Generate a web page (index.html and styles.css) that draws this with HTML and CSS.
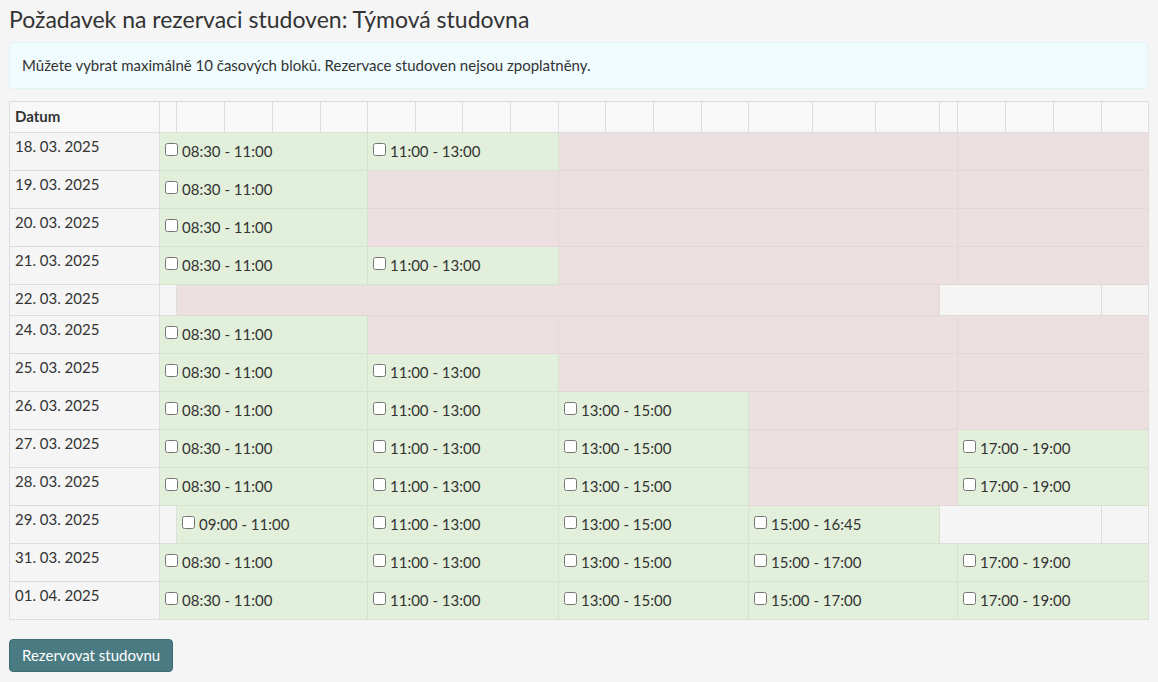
FILE: index.html
```html
<!DOCTYPE html>
<html lang="cs">
<head>
    <meta charset="UTF-8">
    <meta name="viewport" content="width=device-width, initial-scale=1.0">
    <title>Požadavek na rezervaci studoven</title>
    <link rel="stylesheet" href="styles.css">
</head>
<body>
    <div class="page">
        <h1>Požadavek na rezervaci studoven: Týmová studovna</h1>

        <div class="info">Můžete vybrat maximálně 10 časových bloků. Rezervace studoven nejsou zpoplatněny.</div>

        <form>
        <table class="slots">
            <colgroup>
                <col style="width:150px">
                <col style="width:17px">
                <col style="width:48px"><col style="width:48px"><col style="width:48px"><col style="width:47px">
                <col style="width:48px"><col style="width:47px"><col style="width:48px"><col style="width:48px">
                <col style="width:47px"><col style="width:48px"><col style="width:48px"><col style="width:47px">
                <col style="width:64px"><col style="width:63px"><col style="width:64px">
                <col style="width:18px">
                <col style="width:48px"><col style="width:48px"><col style="width:48px"><col style="width:47px">
            </colgroup>
            <thead>
                <tr>
                    <th>Datum</th>
                    <th></th><th></th><th></th><th></th><th></th><th></th><th></th>
                    <th></th><th></th><th></th><th></th><th></th><th></th><th></th>
                    <th></th><th></th><th></th><th></th><th></th><th></th><th></th>
                </tr>
            </thead>
            <tbody>
                <tr>
                    <td class="date">18. 03. 2025</td>
                    <td class="free" colspan="5"><label><input type="checkbox"><span>08:30 - 11:00</span></label></td>
                    <td class="free" colspan="4"><label><input type="checkbox"><span>11:00 - 13:00</span></label></td>
                    <td class="busy" colspan="8"></td>
                    <td class="busy" colspan="4"></td>
                </tr>
                <tr>
                    <td class="date">19. 03. 2025</td>
                    <td class="free" colspan="5"><label><input type="checkbox"><span>08:30 - 11:00</span></label></td>
                    <td class="busy" colspan="4"></td>
                    <td class="busy" colspan="8"></td>
                    <td class="busy" colspan="4"></td>
                </tr>
                <tr>
                    <td class="date">20. 03. 2025</td>
                    <td class="free" colspan="5"><label><input type="checkbox"><span>08:30 - 11:00</span></label></td>
                    <td class="busy" colspan="4"></td>
                    <td class="busy" colspan="8"></td>
                    <td class="busy" colspan="4"></td>
                </tr>
                <tr>
                    <td class="date">21. 03. 2025</td>
                    <td class="free" colspan="5"><label><input type="checkbox"><span>08:30 - 11:00</span></label></td>
                    <td class="free" colspan="4"><label><input type="checkbox"><span>11:00 - 13:00</span></label></td>
                    <td class="busy" colspan="8"></td>
                    <td class="busy" colspan="4"></td>
                </tr>
                <tr>
                    <td class="date">22. 03. 2025</td>
                    <td class="none"></td>
                    <td class="busy" colspan="15"></td>
                    <td class="none" colspan="4"></td>
                    <td class="none"></td>
                </tr>
                <tr>
                    <td class="date">24. 03. 2025</td>
                    <td class="free" colspan="5"><label><input type="checkbox"><span>08:30 - 11:00</span></label></td>
                    <td class="busy" colspan="4"></td>
                    <td class="busy" colspan="8"></td>
                    <td class="busy" colspan="4"></td>
                </tr>
                <tr>
                    <td class="date">25. 03. 2025</td>
                    <td class="free" colspan="5"><label><input type="checkbox"><span>08:30 - 11:00</span></label></td>
                    <td class="free" colspan="4"><label><input type="checkbox"><span>11:00 - 13:00</span></label></td>
                    <td class="busy" colspan="8"></td>
                    <td class="busy" colspan="4"></td>
                </tr>
                <tr>
                    <td class="date">26. 03. 2025</td>
                    <td class="free" colspan="5"><label><input type="checkbox"><span>08:30 - 11:00</span></label></td>
                    <td class="free" colspan="4"><label><input type="checkbox"><span>11:00 - 13:00</span></label></td>
                    <td class="free" colspan="4"><label><input type="checkbox"><span>13:00 - 15:00</span></label></td>
                    <td class="busy" colspan="4"></td>
                    <td class="busy" colspan="4"></td>
                </tr>
                <tr>
                    <td class="date">27. 03. 2025</td>
                    <td class="free" colspan="5"><label><input type="checkbox"><span>08:30 - 11:00</span></label></td>
                    <td class="free" colspan="4"><label><input type="checkbox"><span>11:00 - 13:00</span></label></td>
                    <td class="free" colspan="4"><label><input type="checkbox"><span>13:00 - 15:00</span></label></td>
                    <td class="busy" colspan="4"></td>
                    <td class="free" colspan="4"><label><input type="checkbox"><span>17:00 - 19:00</span></label></td>
                </tr>
                <tr>
                    <td class="date">28. 03. 2025</td>
                    <td class="free" colspan="5"><label><input type="checkbox"><span>08:30 - 11:00</span></label></td>
                    <td class="free" colspan="4"><label><input type="checkbox"><span>11:00 - 13:00</span></label></td>
                    <td class="free" colspan="4"><label><input type="checkbox"><span>13:00 - 15:00</span></label></td>
                    <td class="busy" colspan="4"></td>
                    <td class="free" colspan="4"><label><input type="checkbox"><span>17:00 - 19:00</span></label></td>
                </tr>
                <tr>
                    <td class="date">29. 03. 2025</td>
                    <td class="none"></td>
                    <td class="free" colspan="4"><label><input type="checkbox"><span>09:00 - 11:00</span></label></td>
                    <td class="free" colspan="4"><label><input type="checkbox"><span>11:00 - 13:00</span></label></td>
                    <td class="free" colspan="4"><label><input type="checkbox"><span>13:00 - 15:00</span></label></td>
                    <td class="free" colspan="3"><label><input type="checkbox"><span>15:00 - 16:45</span></label></td>
                    <td class="none" colspan="4"></td>
                    <td class="none"></td>
                </tr>
                <tr>
                    <td class="date">31. 03. 2025</td>
                    <td class="free" colspan="5"><label><input type="checkbox"><span>08:30 - 11:00</span></label></td>
                    <td class="free" colspan="4"><label><input type="checkbox"><span>11:00 - 13:00</span></label></td>
                    <td class="free" colspan="4"><label><input type="checkbox"><span>13:00 - 15:00</span></label></td>
                    <td class="free" colspan="4"><label><input type="checkbox"><span>15:00 - 17:00</span></label></td>
                    <td class="free" colspan="4"><label><input type="checkbox"><span>17:00 - 19:00</span></label></td>
                </tr>
                <tr>
                    <td class="date">01. 04. 2025</td>
                    <td class="free" colspan="5"><label><input type="checkbox"><span>08:30 - 11:00</span></label></td>
                    <td class="free" colspan="4"><label><input type="checkbox"><span>11:00 - 13:00</span></label></td>
                    <td class="free" colspan="4"><label><input type="checkbox"><span>13:00 - 15:00</span></label></td>
                    <td class="free" colspan="4"><label><input type="checkbox"><span>15:00 - 17:00</span></label></td>
                    <td class="free" colspan="4"><label><input type="checkbox"><span>17:00 - 19:00</span></label></td>
                </tr>
            </tbody>
        </table>

        <button type="submit" class="btn">Rezervovat studovnu</button>
        </form>
    </div>
</body>
</html>
```

FILE: styles.css
```css
body {
    margin: 0;
    background: #f5f5f5;
    color: #333;
    font-family: Lato, "Open Sans", Arial, sans-serif;
    font-size: 15px;
}

.page {
    padding: 0 10px 0 9px;
}

h1 {
    margin: 0;
    padding-top: 6px;
    font-size: 23px;
    font-weight: normal;
    line-height: 26px;
    color: #333;
}

.info {
    margin-top: 10px;
    padding: 14px 12px;
    background: #effbfd;
    border: 1px solid #e1f3f6;
    border-radius: 4px;
    line-height: 17px;
    font-size: 15px;
}

.slots {
    margin-top: 12px;
    width: 1140px;
    table-layout: fixed;
    border-collapse: separate;
    border-spacing: 0;
    border-top: 1px solid #ddd;
    border-left: 1px solid #ddd;
    font-size: 15px;
}

.slots th,
.slots td {
    border-right: 1px solid #ddd;
    border-bottom: 1px solid #ddd;
    vertical-align: top;
    text-align: left;
    line-height: 20px;
}

.slots th {
    padding: 4px 5px 6px;
    background: #f8f8f8;
    font-size: 15px;
    font-weight: bold;
}

.slots .date {
    padding: 3px 5px 7px;
    white-space: nowrap;
}

.slots .free {
    padding: 5px 5px 9px;
    background: #e2efda;
    border-color: #d5e4cc;
}

.slots .busy {
    padding: 0;
    background: #ecdfe0;
    border-color: #e5d6d7;
}

.slots .none {
    padding: 0;
}

.slots td:last-child {
    border-right-color: #ddd;
}

.slots tbody tr:last-child td {
    border-bottom-color: #ddd;
}

.slots label {
    display: flex;
    align-items: flex-start;
    gap: 4px;
    white-space: nowrap;
    cursor: pointer;
}

.slots input[type="checkbox"] {
    width: 13px;
    height: 13px;
    margin: 5px 0 0;
    flex: none;
}

.slots label span {
    padding-top: 3px;
}

.btn {
    display: block;
    margin-top: 19px;
    padding: 7px 12px;
    background: #4b7b82;
    border: 1px solid #3f6d73;
    border-radius: 4px;
    color: #fff;
    font-family: Lato, "Open Sans", Arial, sans-serif;
    font-size: 15px;
    line-height: 17px;
    cursor: pointer;
}
```
